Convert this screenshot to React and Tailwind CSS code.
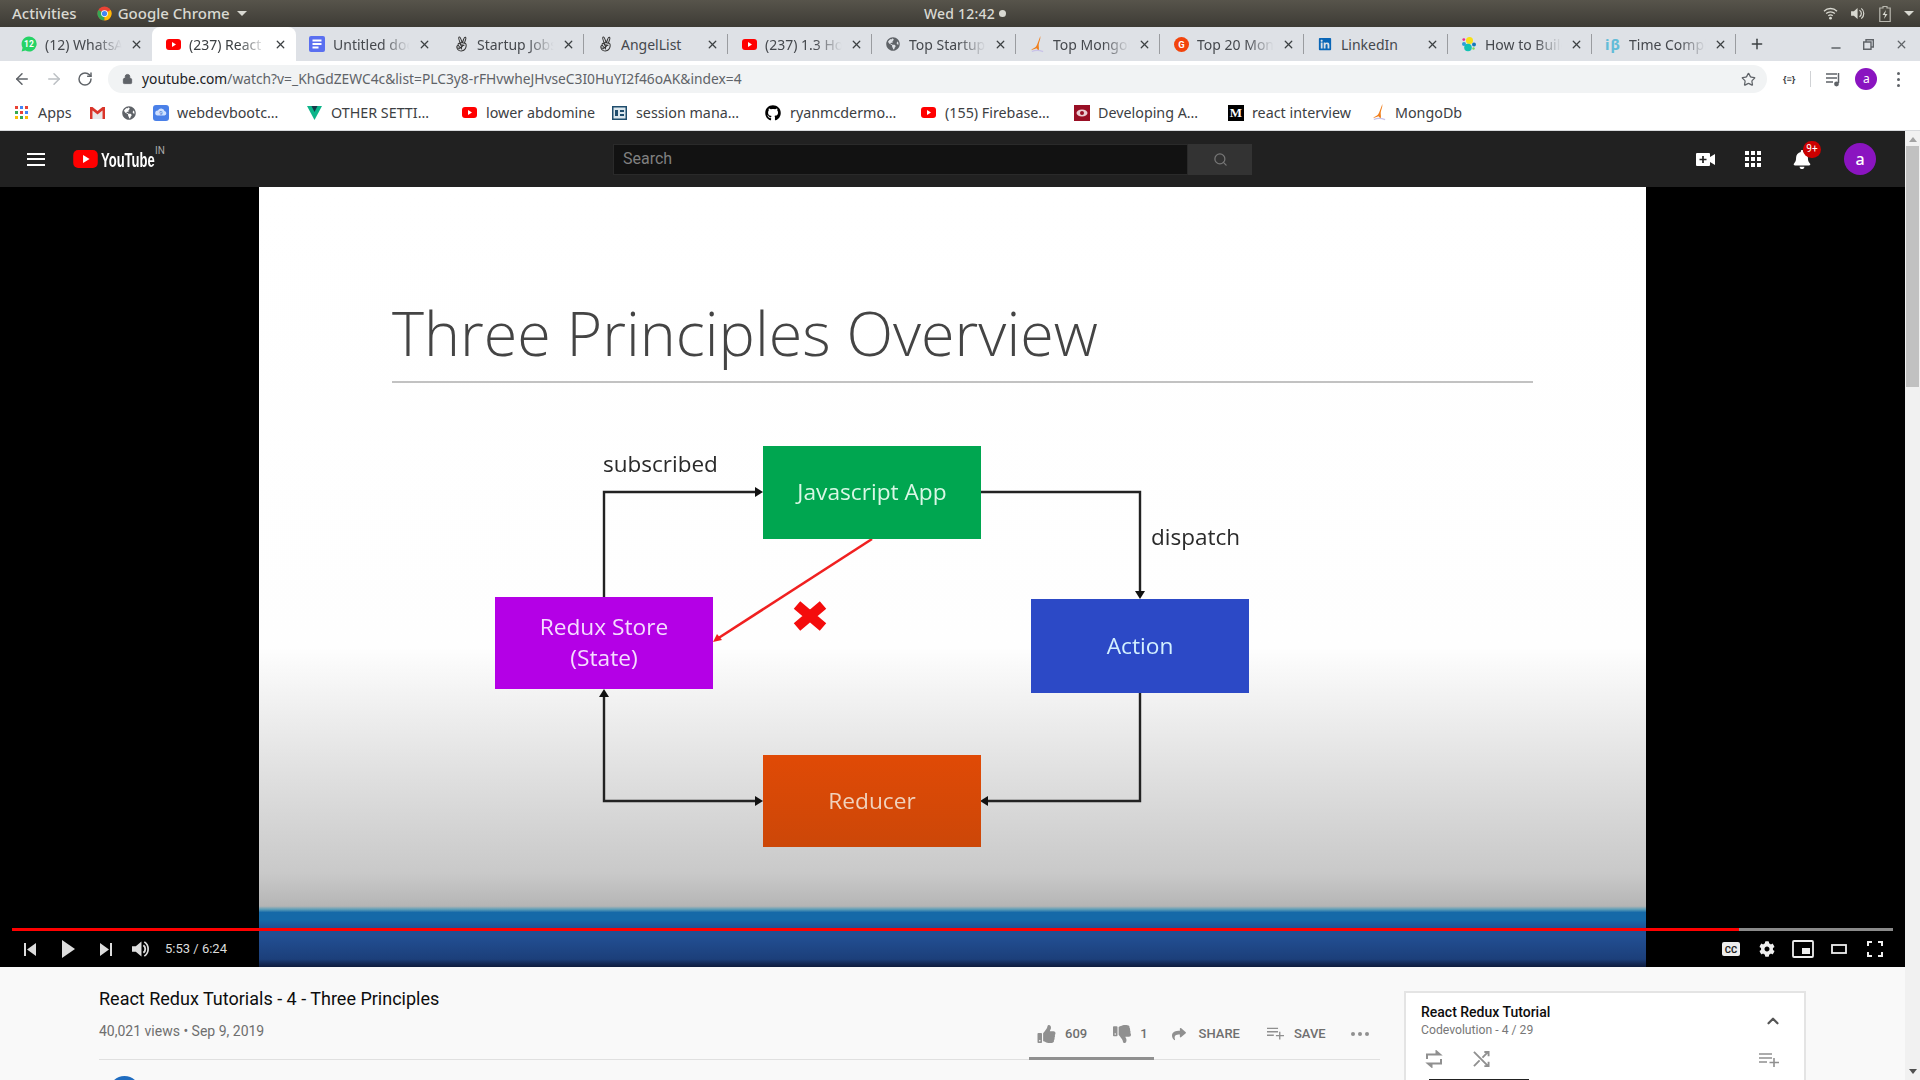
import React from "react";
import { ArrowLeft, ArrowRight, RotateCw, Lock, Star, Search, ChevronUp, X, Plus, Minus } from "lucide-react";
import { FaGithub, FaLinkedin, FaGlobeAmericas, FaAngellist, FaThumbsUp, FaThumbsDown, FaShare, FaCog, FaBell } from "react-icons/fa";

const ui = { fontFamily: '"Noto Sans", "Open Sans", sans-serif' };
const rb = { fontFamily: 'Roboto, "Liberation Sans", sans-serif' };
const os = { fontFamily: '"Open Sans", sans-serif' };

const Yt = ({ c = "w-[15px] h-[11px]" }) => (
  <svg viewBox="0 0 15 11" className={c}><rect width="15" height="11" rx="3" fill="#f00" /><path d="M6 3l4 2.500L6 8z" fill="#fff" /></svg>
);
const Wa = () => (
  <svg viewBox="0 0 16 16" className="w-4 h-4"><path d="M8 .5a7.500 7.500 0 0 0-6.400 11.300L.6 15.500l3.800-1A7.500 7.500 0 1 0 8 .5z" fill="#25d366" /><text x="8" y="11" fontSize="8.500" fontWeight="700" textAnchor="middle" fill="#fff" fontFamily="Roboto">12</text></svg>
);
const Doc = () => (
  <svg viewBox="0 0 16 16" className="w-4 h-4"><rect width="16" height="16" rx="2" fill="#5a6ff0" /><path d="M3.500 4.500h9M3.500 8h9M3.500 11.500h6" stroke="#fff" strokeWidth="1.800" /></svg>
);
const Peace = () => <FaAngellist className="w-[13px] h-[16px] text-[#333]" />;
const Globe = () => <FaGlobeAmericas className="w-[14px] h-[14px] text-[#5f6368]" />;
const Mongo = () => (
  <svg viewBox="0 0 16 18" className="w-[15px] h-[17px]"><path d="M11 0C11.500 4 9.500 6 9.300 9 9.100 11 10 13 9.300 16L7 13 1 15c2-2 4-2.500 5.500-4C8 9 9.500 4 11 0z" fill="#f07f1c" /><path d="M2 16.500c3-1.500 8-1.500 12 0" stroke="#c8c2e8" strokeWidth="1.400" fill="none" /></svg>
);
const G2 = () => (
  <svg viewBox="0 0 16 16" className="w-[15px] h-[15px]"><circle cx="8" cy="8" r="8" fill="#f2440c" /><text x="8" y="11.500" fontSize="10" fontWeight="700" textAnchor="middle" fill="#fff" fontFamily="Roboto">G</text></svg>
);
const Linked = () => <FaLinkedin className="w-[14px] h-[14px] text-[#0a66b7]" />;
const Dots = () => (
  <svg viewBox="0 0 16 16" className="w-4 h-4"><circle cx="8.500" cy="4.500" r="3.500" fill="#f7e017" /><circle cx="7" cy="11.500" r="3.800" fill="#12c2b4" /><circle cx="3" cy="8" r="2" fill="#2e9fd9" /><circle cx="13" cy="8.500" r="2" fill="#1579b8" /><circle cx="2.800" cy="3.600" r="1.400" fill="#ee2c8c" /><circle cx="12.500" cy="12.500" r="1.200" fill="#7ed957" /></svg>
);
const Ib = () => <span className="text-[15px] leading-none font-bold text-[#62bcd8] tracking-[1px]" style={ui}>iβ</span>;

const tabs = [
  { icon: <Wa />, t: "(12) WhatsApp" },
  { icon: <Yt />, t: "(237) React Redux", active: true },
  { icon: <Doc />, t: "Untitled document" },
  { icon: <Peace />, t: "Startup Jobs", sep: true },
  { icon: <Peace />, t: "AngelList", sep: true, full: true },
  { icon: <Yt />, t: "(237) 1.3 Hours", sep: true },
  { icon: <Globe />, t: "Top Startups", sep: true },
  { icon: <Mongo />, t: "Top MongoDB", sep: true },
  { icon: <G2 />, t: "Top 20 MongoDB", sep: true },
  { icon: <Linked />, t: "LinkedIn", sep: true, full: true },
  { icon: <Dots />, t: "How to Build", sep: true },
  { icon: <Ib />, t: "Time Complexity", sep: true },
];

const Tab = ({ tab }) => (
  <div className={`relative flex items-center w-[144px] shrink-0 h-full pl-[13px] pr-[9px] ${tab.active ? "bg-white rounded-t-[8px] text-[#3c4043]" : "text-[#45484d]"}`}>
    <span className="w-[16px] flex justify-center shrink-0">{tab.icon}</span>
    <span className={`ml-[8px] w-[80px] overflow-hidden whitespace-nowrap text-[14px] ${tab.full ? "" : "[mask-image:linear-gradient(to_right,black_62%,transparent_96%)]"}`}>{tab.t}</span>
    <X className="ml-auto w-[13px] h-[13px] text-[#3c4043]" strokeWidth={2.4} />
    {tab.sep && <span className="absolute right-0 top-[7px] h-[20px] w-px bg-[#9a9ca0]" />}
  </div>
);

const Apps = () => (
  <svg viewBox="0 0 13 13" className="w-[13px] h-[13px]">
    {[["#ea4335", "#4285f4", "#ea4335"], ["#34a853", "#ea4335", "#4285f4"], ["#fbbc05", "#34a853", "#fbbc05"]].map((r, i) => r.map((f, j) => <rect key={i + "-" + j} x={j * 5} y={i * 5} width="3" height="3" fill={f} />))}
  </svg>
);
const Gmail = () => (
  <svg viewBox="0 0 15 12" className="w-[15px] h-[12px]"><path d="M2.500 3.500L7.500 7.500l5-4V12h-10z" fill="#e8e8e8" /><path d="M0 0h2.500L7.500 4 12.500 0H15v12h-2.500V3.500L7.500 7.500 2.500 3.500V12H0z" fill="#d9352a" /></svg>
);
const Cloud = () => (
  <svg viewBox="0 0 16 16" className="w-4 h-4"><rect width="16" height="16" rx="3" fill="#4a80e8" /><path d="M4.500 10.500a2.500 2.500 0 0 1 .4-5A3.500 3.500 0 0 1 11.500 6a2.300 2.300 0 0 1 0 4.500z" fill="#cfe0ff" /><text x="8" y="10" fontSize="6" textAnchor="middle" fill="#3a6cc8" fontFamily="Roboto">9</text></svg>
);
const Vee = () => (
  <svg viewBox="0 0 15 14" className="w-[15px] h-[14px]"><path d="M0 0h15L7.500 14z" fill="#0db58a" /><path d="M4.500 0h6L7.500 6z" fill="#16394a" /></svg>
);
const Sess = () => (
  <svg viewBox="0 0 15 14" className="w-[15px] h-[14px]"><rect width="15" height="14" fill="#1f4d6d" /><rect x="1.500" y="1.500" width="12" height="11" fill="#dbe7ee" /><path d="M3 4h3v6H3zM8 4h4v2H8zM8 8h4v2H8z" fill="#1f4d6d" /></svg>
);
const Dev = () => (
  <svg viewBox="0 0 16 16" className="w-4 h-4"><rect width="16" height="16" fill="#990f25" /><ellipse cx="8" cy="8" rx="5.500" ry="3.500" fill="#eacdd2" /><circle cx="8" cy="8" r="2" fill="#990f25" /></svg>
);
const Med = () => (
  <span className="flex items-center justify-center w-[16px] h-[16px] bg-black text-white text-[13px] font-bold leading-none" style={{ fontFamily: '"Liberation Serif", serif' }}>M</span>
);

const marks = [
  { i: <Apps />, t: "Apps", w: "w-[75px]", g: "ml-[10px]" },
  { i: <Gmail />, t: "", w: "w-[32px]", g: "" },
  { i: <Globe />, t: "", w: "w-[31px]", g: "" },
  { i: <Cloud />, t: "webdevbootc…", w: "w-[154px]", g: "ml-[8px]" },
  { i: <Vee />, t: "OTHER SETTI…", w: "w-[155px]", g: "ml-[9px]" },
  { i: <Yt />, t: "lower abdomine", w: "w-[150px]", g: "ml-[9px]" },
  { i: <Sess />, t: "session mana…", w: "w-[153px]", g: "ml-[9px]" },
  { i: <FaGithub className="w-4 h-4 text-black" />, t: "ryanmcdermo…", w: "w-[156px]", g: "ml-[9px]" },
  { i: <Yt />, t: "(155) Firebase…", w: "w-[153px]", g: "ml-[9px]" },
  { i: <Dev />, t: "Developing A…", w: "w-[154px]", g: "ml-[8px]" },
  { i: <Med />, t: "react interview", w: "w-[144px]", g: "ml-[8px]" },
  { i: <Mongo />, t: "MongoDb", w: "w-[100px]", g: "ml-[8px]" },
];

const Wifi = () => (
  <svg viewBox="0 0 16 14" className="w-[15px] h-[13px]"><path d="M1 4.500a10 10 0 0 1 14 0M3.300 7a7 7 0 0 1 9.400 0M5.600 9.500a3.600 3.600 0 0 1 4.800 0" stroke="#d8d8d0" strokeWidth="1.400" fill="none" /><circle cx="8" cy="12" r="1.500" fill="#d8d8d0" /></svg>
);
const Speaker = () => (
  <svg viewBox="0 0 16 14" className="w-[15px] h-[13px]"><path d="M0 4.500h3L7 1v12L3 9.500H0z" fill="#d8d8d0" /><path d="M9 3.500a4 4 0 0 1 0 7M11 1.500a7 7 0 0 1 0 11" stroke="#d8d8d0" strokeWidth="1.300" fill="none" /></svg>
);
const Battery = () => (
  <svg viewBox="0 0 12 16" className="w-[12px] h-[16px]"><path d="M4 .5h4v1.500h3.200v13.500H.8V2H4z" fill="none" stroke="#b9b8b0" strokeWidth="1.200" /><path d="M7 4L3.500 9H6l-1 4 3.500-5H6z" fill="#d8d8d0" /></svg>
);
const Chrome = () => (
  <svg viewBox="0 0 16 16" className="w-[15px] h-[15px]"><circle cx="8" cy="8" r="7.500" fill="#ea4335" /><path d="M8 8L1.500 4.200A7.500 7.500 0 0 0 8 15.500z" fill="#34a853" /><path d="M8 8l6.500-3.800A7.500 7.500 0 0 1 8 15.500z" fill="#fbbc05" /><circle cx="8" cy="8" r="3.600" fill="#fff" /><circle cx="8" cy="8" r="2.800" fill="#4285f4" /></svg>
);

const PlayQueue = ({ c = "w-[16px] h-[15px]", color = "#5f6368" }) => (
  <svg viewBox="0 0 16 15" className={c}><path d="M0 2h11M0 6h11M0 10h7" stroke={color} strokeWidth="1.500" /><path d="M12.500 1v10" stroke={color} strokeWidth="1.500" /><circle cx="10.500" cy="12" r="2.400" fill={color} /></svg>
);
const AddList = ({ c = "w-[18px] h-[14px]", color = "#909090" }) => (
  <svg viewBox="0 0 20 14" className={c}><path d="M0 1h13M0 5h13M0 9h8M15 5v9M10.500 9.500H20" stroke={color} strokeWidth="1.600" fill="none" /></svg>
);

const Node = ({ c, children }) => (
  <div className={`absolute flex items-center justify-center text-center text-[22.700px] leading-[31px] pb-[2px] ${c}`} style={os}>{children}</div>
);

const Slide = () => (
  <div className="relative flex-1 h-full bg-[linear-gradient(to_bottom,#ffffff_0%,#fefefe_59%,#e4e4e4_73%,#c9c9c9_88%,#b6b6b6_92%,#b4b4b4_92.2%,#5f9fb8_92.6%,#1569a8_93%,#1569a8_94%,#224f93_95%,#224f93_96%,#1c3f7a_99%,#132853_99.6%,#0e1c3e_100%)] overflow-hidden blur-[0.4px]">
    <div className="pl-[133px] pr-[113px] pt-[110px]">
      <div className="text-[61px] leading-[72px] font-light text-[#444] whitespace-nowrap" style={os}>Three Principles Overview</div>
      <div className="mt-[12px] h-[2px] bg-[#c2c2c2]" />
    </div>
    <svg viewBox="0 0 1387 780" className="absolute left-0 top-0 w-[1387px] h-[780px]">
      <g fill="none" stroke="#222" strokeWidth="2.400">
        <path d="M345 410V305H499" />
        <path d="M721 305H881V406" />
        <path d="M881 506V614H728" />
        <path d="M499 614H345V509" />
      </g>
      <g fill="#111">
        <path d="M496 300l8 5-8 5z" />
        <path d="M876 404h10l-5 8z" />
        <path d="M729 609v10l-8-5z" />
        <path d="M496 609l8 5-8 5z" />
        <path d="M340 510h10l-5-8z" />
      </g>
      <path d="M613 352L458 452" stroke="#f02020" strokeWidth="2.600" />
      <path d="M454 455l4-8 5 6z" fill="#f02020" />
      <path d="M538 418l13 11 13-11M538 440l13-11 13 11" fill="none" stroke="#f40c0c" strokeWidth="10" />
    </svg>
    <div className="absolute left-[344px] top-[262px] text-[22.500px] leading-[30px] text-[#2a2a2a]" style={os}>subscribed</div>
    <div className="absolute left-[892px] top-[335px] text-[22.500px] leading-[30px] text-[#2a2a2a]" style={os}>dispatch</div>
    <Node c="left-[504px] top-[259px] w-[218px] h-[93px] bg-[#00a650] text-[#d9f7e5]">Javascript App</Node>
    <Node c="left-[236px] top-[410px] w-[218px] h-[92px] bg-[#b400e6] text-[#f5dcff]"><span>Redux Store<br />(State)</span></Node>
    <Node c="left-[772px] top-[412px] w-[218px] h-[94px] bg-[#2c49c6] text-[#d3f0ff]">Action</Node>
    <Node c="left-[504px] top-[568px] w-[218px] h-[92px] bg-[linear-gradient(to_bottom,#e04a06,#cc4708)] text-[#f0d2bd]">Reducer</Node>
  </div>
);

const Controls = () => (
  <div className="absolute left-0 right-0 bottom-0 h-[39px] px-[12px]">
    <div className="flex h-[3px]">
      <div className="w-[1727px] bg-[#f00]" />
      <div className="flex-1 bg-[#8a8a8a]" />
    </div>
    <div className="flex items-center h-[36px] -mx-[12px] text-[#ddd]">
      <svg viewBox="0 0 12 13" className="ml-[24px] w-[12px] h-[13px]"><path d="M0 0h2v13H0zM12 0v13L3 6.500z" fill="#ddd" /></svg>
      <svg viewBox="0 0 13 18" className="ml-[26px] w-[13px] h-[18px]"><path d="M0 0l13 9-13 9z" fill="#ddd" /></svg>
      <svg viewBox="0 0 12 13" className="ml-[25px] w-[12px] h-[13px]"><path d="M12 0h-2v13h2zM0 0v13l9-6.500z" fill="#ddd" /></svg>
      <svg viewBox="0 0 19 18" className="ml-[20px] w-[18px] h-[18px]"><path d="M0 6h4l6-5v16l-6-5H0z" fill="#ddd" /><path d="M12 5a5 5 0 0 1 0 8" stroke="#ddd" strokeWidth="2" fill="none" /><path d="M13 1.500a9 9 0 0 1 0 15" stroke="#ddd" strokeWidth="1.800" fill="none" /></svg>
      <span className="ml-[15px] text-[13px]" style={rb}>5:53 / 6:24</span>
      <div className="ml-auto flex items-center pr-[22px]">
        <svg viewBox="0 0 18 14" className="w-[18px] h-[14px]"><rect width="18" height="14" rx="2" fill="#eee" /><text x="9" y="10.500" textAnchor="middle" fontSize="9.500" fontWeight="700" fill="#222" fontFamily="Roboto">CC</text></svg>
        <FaCog className="ml-[19px] w-[16px] h-[16px] text-[#eee]" />
        <svg viewBox="0 0 22 18" className="ml-[17px] w-[22px] h-[18px]"><rect x="1" y="1" width="20" height="16" rx="1" fill="none" stroke="#eee" strokeWidth="1.800" /><rect x="10" y="8" width="8" height="6" fill="#eee" /></svg>
        <svg viewBox="0 0 16 10" className="ml-[17px] w-[16px] h-[10px]"><rect x="1" y="1" width="14" height="8" fill="none" stroke="#eee" strokeWidth="1.800" /></svg>
        <svg viewBox="0 0 16 16" className="ml-[20px] w-[16px] h-[16px]"><path d="M1 5V1h4M11 1h4v4M15 11v4h-4M5 15H1v-4" fill="none" stroke="#eee" strokeWidth="2" /></svg>
      </div>
    </div>
  </div>
);

export default function App() {
  return (
    <div className="w-[1920px] h-[1080px] overflow-hidden flex flex-col bg-[#f9f9f9]" style={ui}>
      <div className="relative h-[27px] shrink-0 flex items-center bg-[linear-gradient(to_bottom,#57544b,#3d3b35)] text-[#d9d9d2] text-[15px] font-medium">
        <span className="ml-[12px]">Activities</span>
        <span className="ml-[20px]"><Chrome /></span>
        <span className="ml-[6px]">Google Chrome</span>
        <svg viewBox="0 0 10 5" className="ml-[7px] w-[10px] h-[5px]"><path d="M0 0h10L5 5z" fill="#d9d9d2" /></svg>
        <div className="absolute left-[924px] top-0 h-full flex items-center gap-[4px] text-[14px]">
          <span className="tracking-[0.2px]">Wed 12:42</span>
          <span className="w-[7px] h-[7px] rounded-full bg-[#d9d9d2]" />
        </div>
        <div className="ml-auto flex items-center gap-[13px] pr-[6px]">
          <Wifi /><Speaker /><Battery />
          <svg viewBox="0 0 10 5" className="w-[10px] h-[5px]"><path d="M0 0h10L5 5z" fill="#d9d9d2" /></svg>
        </div>
      </div>

      <div className="flex items-center h-[34px] shrink-0 bg-[#dee1e6] pl-[8px]">
        {tabs.map((t, i) => <Tab key={i} tab={t} />)}
        <Plus className="ml-[13px] w-[16px] h-[16px] text-[#3c4043]" strokeWidth={2.2} />
        <Minus className="ml-[64px] mt-[8px] w-[14px] h-[14px] text-[#5f6368]" strokeWidth={2.2} />
        <svg viewBox="0 0 11 11" className="ml-[20px] w-[11px] h-[11px]"><path d="M3 3V.7h7.300V8H8M.7 3h7.300v7.300H.7z" fill="none" stroke="#5f6368" strokeWidth="1.400" /></svg>
        <X className="ml-[21px] w-[13px] h-[13px] text-[#5f6368]" strokeWidth={2.4} />
      </div>

      <div className="flex items-center h-[36px] shrink-0 bg-white">
        <ArrowLeft className="ml-[13px] w-[18px] h-[18px] text-[#5f6368]" strokeWidth={2} />
        <ArrowRight className="ml-[14px] w-[18px] h-[18px] text-[#bcc0c4]" strokeWidth={2} />
        <RotateCw className="ml-[14px] w-[16px] h-[16px] text-[#5f6368]" strokeWidth={2.2} />
        <div className="ml-[15px] flex items-center w-[1659px] h-[28px] rounded-full bg-[#f1f3f4] pl-[14px] pr-[11px]">
          <Lock className="w-[11px] h-[12px] text-[#5f6368] fill-[#5f6368]" />
          <span className="ml-[9px] text-[13.800px] text-[#5f6368] whitespace-nowrap"><span className="text-[#202124]">youtube.com</span>/watch?v=_KhGdZEWC4c&amp;list=PLC3y8-rFHvwheJHvseC3I0HuYI2f46oAK&amp;index=4</span>
          <Star className="ml-auto w-[15px] h-[15px] text-[#5f6368]" strokeWidth={2} />
        </div>
        <span className="ml-[16px] text-[9px] font-bold text-[#3c4043] whitespace-nowrap" style={ui}>{"{≡}"}</span>
        <span className="ml-[15px] w-px h-[16px] bg-[#d0d2d5]" />
        <span className="ml-[15px]"><PlayQueue /></span>
        <span className="ml-[13px] flex items-center justify-center w-[22px] h-[22px] rounded-full bg-[#8a14c0] text-white text-[12px]">a</span>
        <span className="ml-[20px] flex flex-col gap-[3px]">
          <span className="w-[3px] h-[3px] rounded-full bg-[#5f6368]" />
          <span className="w-[3px] h-[3px] rounded-full bg-[#5f6368]" />
          <span className="w-[3px] h-[3px] rounded-full bg-[#5f6368]" />
        </span>
      </div>

      <div className="flex items-center h-[34px] pb-[2px] shrink-0 bg-white border-b border-[#d8dadd] text-[14.300px] text-[#3c4043]">
        <span className="w-[5px] shrink-0" />
        {marks.map((m, i) => (
          <div key={i} className={`flex items-center shrink-0 pl-[10px] ${m.w}`}>
            <span className="flex items-center justify-center shrink-0 min-w-[13px]">{m.i}</span>
            {m.t && <span className={`whitespace-nowrap ${m.g}`}>{m.t}</span>}
          </div>
        ))}
      </div>

      <div className="flex flex-1 min-h-0">
        <div className="flex flex-col w-[1905px] shrink-0">
          <div className="flex items-center h-[56px] shrink-0 bg-[#212121]">
            <div className="ml-[27px] flex flex-col gap-[3.500px]">
              <span className="w-[18px] h-[2px] bg-white" /><span className="w-[18px] h-[2px] bg-white" /><span className="w-[18px] h-[2px] bg-white" />
            </div>
            <Yt c="ml-[28px] w-[25px] h-[18px]" />
            <span className="ml-[3px] block w-[52px] text-[21px] leading-none text-white font-bold origin-left scale-x-[0.62] whitespace-nowrap" style={{ fontFamily: '"Liberation Sans", sans-serif' }}>YouTube</span>
            <span className="ml-[2px] -mt-[18px] w-[10px] text-[10px] text-[#aaa]" style={rb}>IN</span>
            <div className="ml-[448px] flex h-[31px] w-[575px] bg-[#121212] border border-[#2a2a2a] items-center pl-[9px] text-[16px] text-[#808080]" style={rb}>Search</div>
            <div className="flex h-[31px] w-[64px] items-center justify-center bg-[#333]">
              <Search className="w-[15px] h-[15px] text-[#777]" strokeWidth={2} />
            </div>
            <svg viewBox="0 0 19 13" className="ml-[444px] w-[19px] h-[13px]"><path d="M0 1a1 1 0 0 1 1-1h12a1 1 0 0 1 1 1v3l5-3v11l-5-3v3a1 1 0 0 1-1 1H1a1 1 0 0 1-1-1z" fill="#fff" /><path d="M7 3v7M3.500 6.500h7" stroke="#212121" strokeWidth="1.700" /></svg>
            <div className="ml-[30px] grid grid-cols-3 gap-[2px]">
              {[0, 1, 2, 3, 4, 5, 6, 7, 8].map((i) => <span key={i} className="w-[4px] h-[4px] bg-white" />)}
            </div>
            <div className="relative ml-[32px]">
              <FaBell className="w-[18px] h-[19px] text-white" />
              <span className="absolute left-[10px] -top-[9px] flex items-center justify-center w-[18px] h-[17px] rounded-full bg-[#cc0000] text-white text-[10px] leading-none" style={rb}>9+</span>
            </div>
            <span className="ml-[33px] flex items-center justify-center w-[32px] h-[32px] rounded-full bg-[#8a14c0] text-white text-[16px] font-medium">a</span>
          </div>

          <div className="relative flex h-[780px] shrink-0 bg-black">
            <div className="w-[259px] shrink-0" />
            <Slide />
            <div className="w-[259px] shrink-0" />
            <Controls />
          </div>

          <div className="flex flex-1 min-h-0 pl-[99px]" style={rb}>
            <div className="relative w-[1281px] shrink-0">
              <div className="pt-[20px] text-[18px] leading-[24px] text-[#0d0d0d]">React Redux Tutorials - 4 - Three Principles</div>
              <div className="mt-[10px] text-[14px] leading-[20px] text-[#6f6f6f]">40,021 views • Sep 9, 2019</div>
              <div className="absolute left-0 right-0 top-[92px] h-px bg-[#e0e0e0]" />
              <div className="absolute left-[930px] top-[90px] w-[125px] h-[3px] bg-[#909090]" />
              <div className="absolute left-[938px] top-[57px] flex items-center text-[#6f6f6f] text-[13px] font-medium whitespace-nowrap">
                <FaThumbsUp className="w-[19px] h-[18px] text-[#909090]" />
                <span className="ml-[9px]">609</span>
                <FaThumbsDown className="ml-[26px] w-[18px] h-[18px] text-[#909090]" />
                <span className="ml-[9px]">1</span>
                <FaShare className="ml-[23px] w-[16px] h-[14px] text-[#909090]" />
                <span className="ml-[12px]">SHARE</span>
                <AddList c="ml-[27px] w-[17px] h-[13px]" />
                <span className="ml-[10px]">SAVE</span>
                <span className="ml-[25px] flex gap-[3px]">
                  <span className="w-[4px] h-[4px] rounded-full bg-[#909090]" />
                  <span className="w-[4px] h-[4px] rounded-full bg-[#909090]" />
                  <span className="w-[4px] h-[4px] rounded-full bg-[#909090]" />
                </span>
              </div>
              <div className="absolute left-[10px] top-[109px] w-[31px] h-[31px] rounded-full bg-[#1f6cc0]" />
            </div>
            <div className="relative ml-[24px] mt-[24px] w-[402px] h-[200px] shrink-0 bg-white border-2 border-[#e4e4e4] box-border">
              <div className="absolute left-[15px] top-[9px] text-[14px] leading-[20px] font-medium text-[#0d0d0d]">React Redux Tutorial</div>
              <div className="absolute left-[15px] top-[29px] text-[12.200px] leading-[17px] text-[#777]">Codevolution - 4 / 29</div>
              <ChevronUp className="absolute left-[358px] top-[19px] w-[18px] h-[18px] text-[#555]" strokeWidth={3} />
              <svg viewBox="0 0 18 18" className="absolute left-[19px] top-[57px] w-[18px] h-[18px]"><path d="M2 9V4.500h12M11.500 1.500l3.500 3-3.500 0zM16 9v4.500H4M6.500 16.500l-3.500-3 3.500 0z" fill="none" stroke="#909090" strokeWidth="2" /></svg>
              <svg viewBox="0 0 18 18" className="absolute left-[67px] top-[58px] w-[17px] h-[17px]"><path d="M1 1l15 15M1 16L7 10M10 7l6-6M12 1h4.500v4.500M12 16h4.500v-4.500" fill="none" stroke="#909090" strokeWidth="2" /></svg>
              <AddList c="absolute left-[353px] top-[60px] w-[20px] h-[14px]" />
              <div className="absolute left-[23px] top-[86px] w-[100px] h-[2px] bg-[#212121]" />
            </div>
          </div>
        </div>

        <div className="relative w-[15px] shrink-0 bg-[#f1f1f1] flex flex-col items-center">
          <svg viewBox="0 0 8 5" className="mt-[6px] w-[8px] h-[5px]"><path d="M0 5l4-5 4 5z" fill="#a3a3a3" /></svg>
          <div className="mt-[4px] w-[13px] h-[241px] bg-[#c1c1c1]" />
          <svg viewBox="0 0 8 5" className="mt-auto mb-[6px] w-[8px] h-[5px]"><path d="M0 0l4 5 4-5z" fill="#505050" /></svg>
        </div>
      </div>
    </div>
  );
}
